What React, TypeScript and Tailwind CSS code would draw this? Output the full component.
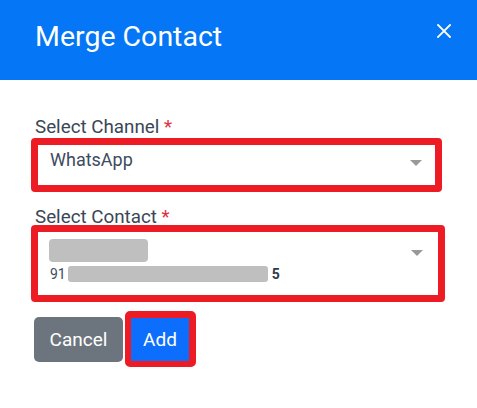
import React from "react";

export default function App() {
  return (
    <div className="w-[477px] h-[408px] bg-white font-['Roboto',_'Liberation_Sans',_sans-serif] overflow-hidden">
      <div className="h-[80px] bg-[#0576f5] flex items-start justify-between pl-[35px] pr-[26px]">
        <h1 className="text-[28.5px] leading-[28px] text-white mt-[23px] font-normal">Merge Contact</h1>
        <svg width="14" height="14" viewBox="0 0 14 14" className="mt-[24px]">
          <path d="M1 1 L13 13 M13 1 L1 13" stroke="white" strokeWidth="1.8" strokeLinecap="square" />
        </svg>
      </div>
      <div className="flex flex-col items-start pl-[31px] pt-[37px]">
        <label className="ml-[4px] text-[18.8px] leading-[20px] text-[#3b4656]">
          Select Channel <span className="text-[#e0303d]">*</span>
        </label>
        <div className="mt-[1px] w-[411px] h-[54px] border-[7px] border-[#ed1c24] rounded-[4px] flex items-start justify-between">
          <span className="pl-[12px] pt-[3px] text-[18px] leading-[24px] text-[#3d4b5e]">WhatsApp</span>
          <svg width="12" height="6" viewBox="0 0 12 6" className="mt-[15px] mr-[13px]">
            <path d="M0 0 L12 0 L6 6 Z" fill="#999999" />
          </svg>
        </div>
        <label className="mt-[15px] ml-[4px] text-[18.8px] leading-[20px] text-[#3b4656]">
          Select Contact <span className="text-[#e0303d]">*</span>
        </label>
        <div className="-mt-[2px] w-[414px] h-[77px] border-[7px] border-[#ed1c24] rounded-[4px] flex items-start justify-between">
          <div className="flex flex-col pl-[11px] pt-[7px]">
            <div className="w-[99px] h-[23px] rounded-[4px] bg-[#bfbfbf]" />
            <div className="mt-[4px] h-[16px] flex items-center text-[14px] leading-[16px] text-[#3d4b5e]">
              <span className="ml-[1px]">91</span>
              <div className="ml-[2px] w-[200px] h-[16px] rounded-[3px] bg-[#bfbfbf]" />
              <span className="ml-[4px] font-bold text-[#2c3a4d]">5</span>
            </div>
          </div>
          <svg width="12" height="6" viewBox="0 0 12 6" className="mt-[18px] mr-[15px]">
            <path d="M0 0 L12 0 L6 6 Z" fill="#999999" />
          </svg>
        </div>
        <div className="mt-[9px] ml-[3px] flex items-center gap-[2px]">
          <button className="w-[89px] h-[45px] rounded-[5px] bg-[#6c757d] text-white text-[19px] leading-none">
            Cancel
          </button>
          <div className="rounded-[5px] border-[#ed1c24] border-l-[6px] border-r-[7px] border-t-[7px] border-b-[6px]">
            <button className="w-[58px] h-[43px] bg-[#0d6efd] text-white text-[19px] leading-none flex items-center justify-center">
              Add
            </button>
          </div>
        </div>
      </div>
    </div>
  );
}
